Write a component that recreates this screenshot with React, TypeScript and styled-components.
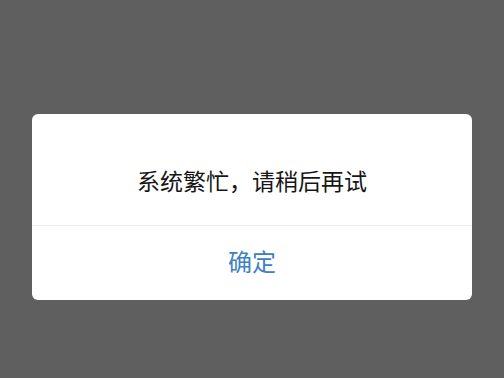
import styled, { createGlobalStyle } from "styled-components";

const GlobalStyle = createGlobalStyle`
    html, body {
        margin: 0;
        padding: 0;
        background: #5f5f60;
    }
    body {
        font-family: "Noto Sans CJK SC", "Noto Sans", sans-serif;
    }
`;

export default function App() {
    return (
        <>
            <GlobalStyle />
            <Page>
                <Dialog>
                    <Message>系统繁忙，请稍后再试</Message>
                    <Actions>
                        <ConfirmBtn>确定</ConfirmBtn>
                    </Actions>
                </Dialog>
            </Page>
        </>
    );
}

const Page = styled.div`
    box-sizing: border-box;
    display: flex;
    justify-content: center;
    align-items: flex-start;
    width: 504px;
    height: 378px;
    padding-top: 114px;
    background: #5f5f60;
`;

const Dialog = styled.div`
    display: flex;
    flex-direction: column;
    width: 440px;
    height: 186px;
    background: #ffffff;
    border-radius: 6px;
    overflow: hidden;
`;

const Message = styled.div`
    box-sizing: border-box;
    height: 112px;
    padding-top: 51px;
    text-align: center;
    font-size: 23px;
    line-height: 30px;
    color: #161616;
    border-bottom: 1px solid #ececec;
`;

const Actions = styled.div`
    flex: 1;
    display: flex;
    align-items: center;
    justify-content: center;
    padding-bottom: 5px;
`;

const ConfirmBtn = styled.button`
    all: unset;
    font-family: "Noto Sans CJK SC", "Noto Sans", sans-serif;
    font-size: 24px;
    line-height: 30px;
    color: #3d80c6;
    cursor: pointer;
`;
